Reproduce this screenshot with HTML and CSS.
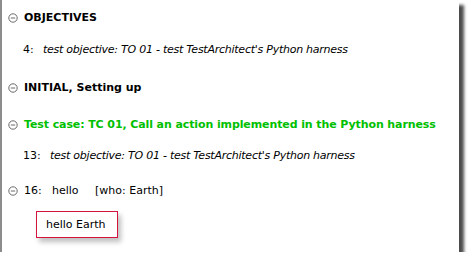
FILE: index.html
```html
<!DOCTYPE html>
<html>
<head>
<meta charset="utf-8">
<link rel="stylesheet" href="styles.css">
</head>
<body>
<div class="panel">
  <div class="row r1 bold">
    <svg class="tog" width="10" height="10" viewBox="0 0 10 10"><circle cx="5" cy="5" r="4.2" fill="none" stroke="#6b6b6b" stroke-width="1"/><line x1="2.8" y1="5" x2="7.2" y2="5" stroke="#6b6b6b" stroke-width="1"/></svg>
    <span>OBJECTIVES</span>
  </div>
  <div class="row r2 indent">
    <span class="num">4:</span><span class="it">test objective: TO 01 - test TestArchitect's Python harness</span>
  </div>
  <div class="row r3 bold">
    <svg class="tog" width="10" height="10" viewBox="0 0 10 10"><circle cx="5" cy="5" r="4.2" fill="none" stroke="#6b6b6b" stroke-width="1"/><line x1="2.8" y1="5" x2="7.2" y2="5" stroke="#6b6b6b" stroke-width="1"/></svg>
    <span>INITIAL, Setting up</span>
  </div>
  <div class="row r4 bold green">
    <svg class="tog" width="10" height="10" viewBox="0 0 10 10"><circle cx="5" cy="5" r="4.2" fill="none" stroke="#6b6b6b" stroke-width="1"/><line x1="2.8" y1="5" x2="7.2" y2="5" stroke="#6b6b6b" stroke-width="1"/></svg>
    <span class="tight">Test case: TC 01, Call an action implemented in the Python harness</span>
  </div>
  <div class="row r5 indent">
    <span class="num num13">13:</span><span class="it">test objective: TO 01 - test TestArchitect's Python harness</span>
  </div>
  <div class="row r6">
    <svg class="tog" width="10" height="10" viewBox="0 0 10 10"><circle cx="5" cy="5" r="4.2" fill="none" stroke="#6b6b6b" stroke-width="1"/><line x1="2.8" y1="5" x2="7.2" y2="5" stroke="#6b6b6b" stroke-width="1"/></svg>
    <span class="num16">16:</span><span class="kw">hello</span><span>[who: Earth]</span>
  </div>
  <div class="output">hello Earth</div>
</div>
</body>
</html>
```
FILE: styles.css
```css
html, body {
  margin: 0;
  padding: 0;
  background: #ffffff;
}
body {
  font-family: "DejaVu Sans", Verdana, sans-serif;
  font-size: 11px;
  color: #000;
}
.panel {
  width: 459px;
  height: 252px;
  border-left: 2px solid #8c8c8c;
  background: #fff;
  box-shadow: 5px 5px 3px rgba(0, 0, 0, 0.7);
  padding-left: 6px;
  padding-top: 10px;
  box-sizing: border-box;
  display: flex;
  flex-direction: column;
  align-items: flex-start;
}
.row {
  display: flex;
  align-items: center;
  height: 16px;
  line-height: 16px;
  white-space: nowrap;
}
.bold { font-weight: bold; }
.green { color: #00c000; }
.tight { letter-spacing: -0.1px; }
.tog {
  width: 10px;
  height: 10px;
  margin-right: 6px;
  flex: none;
}
.indent { padding-left: 15px; }
.num { width: 20px; }
.num13 { width: 27px; }
.it { font-style: italic; letter-spacing: -0.25px; }
.num16 { width: 28px; }
.kw { width: 43px; }
.r2 { margin-top: 16px; }
.r3 { margin-top: 22px; }
.r4 { margin-top: 21px; }
.r5 { margin-top: 15px; }
.r6 { margin-top: 19px; }
.output {
  margin-top: 12px;
  margin-left: 28px;
  height: 27px;
  line-height: 25px;
  padding: 0 9px;
  width: 82px;
  box-sizing: border-box;
  border: 1px solid #d4143c;
  box-shadow: 3px 4px 5px rgba(0, 0, 0, 0.25);
  background: #fff;
}
```
